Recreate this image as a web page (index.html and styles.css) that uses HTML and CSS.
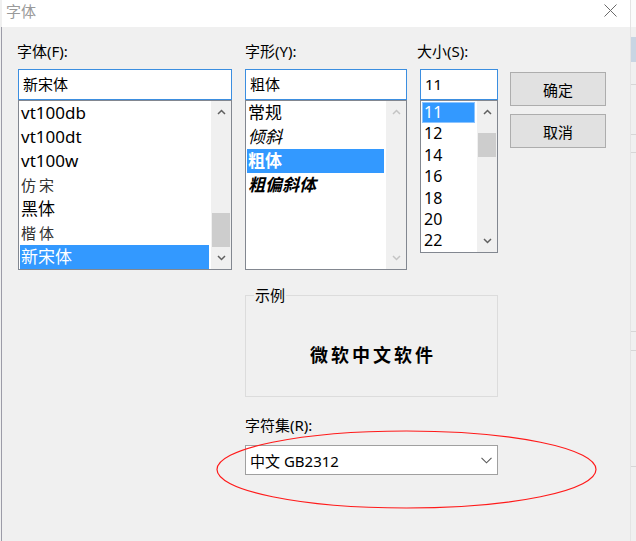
FILE: index.html
```html
<!DOCTYPE html>
<html lang="zh-CN">
<head>
<meta charset="utf-8">
<title>字体</title>
<link rel="stylesheet" href="styles.css">
</head>
<body>
<div class="screen">
  <div class="dialog">
    <div class="titlebar">
      <span class="title">字体</span>
      <svg class="close" width="13" height="13" viewBox="0 0 13 13"><path d="M0.5 0.5 L12.5 12.5 M12.5 0.5 L0.5 12.5" fill="none" stroke="#6a6a6a" stroke-width="1"/></svg>
    </div>
    <div class="body">
      <div class="col">
        <div class="label label-font">字体(F):</div>
        <div class="input">新宋体</div>
        <div class="list list-tall">
          <div class="items">
            <div class="item">vt100db</div>
            <div class="item">vt100dt</div>
            <div class="item">vt100w</div>
            <div class="item item-thin">仿宋</div>
            <div class="item">黑体</div>
            <div class="item item-thin">楷体</div>
            <div class="item sel">新宋体</div>
          </div>
          <div class="sb">
            <div class="sb-btn"><svg width="9" height="6" viewBox="0 0 9 6"><path d="M1 5 L4.5 1.5 L8 5" fill="none" stroke="#606060" stroke-width="1.5"/></svg></div>
            <div class="sb-track track-end"><div class="thumb thumb-font"></div></div>
            <div class="sb-btn"><svg width="9" height="6" viewBox="0 0 9 6"><path d="M1 1 L4.5 4.5 L8 1" fill="none" stroke="#606060" stroke-width="1.5"/></svg></div>
          </div>
        </div>
      </div>

      <div class="col">
        <div class="label">字形(Y):</div>
        <div class="input">粗体</div>
        <div class="list list-tall">
          <div class="items">
            <div class="item">常规</div>
            <div class="item italic">倾斜</div>
            <div class="item bold sel">粗体</div>
            <div class="item bold italic">粗偏斜体</div>
          </div>
          <div class="sb">
            <div class="sb-btn"><svg width="9" height="6" viewBox="0 0 9 6"><path d="M1 5 L4.5 1.5 L8 5" fill="none" stroke="#c4c4c4" stroke-width="1.5"/></svg></div>
            <div class="sb-track"></div>
            <div class="sb-btn"><svg width="9" height="6" viewBox="0 0 9 6"><path d="M1 1 L4.5 4.5 L8 1" fill="none" stroke="#c4c4c4" stroke-width="1.5"/></svg></div>
          </div>
        </div>
      </div>

      <div class="col">
        <div class="label label-size">大小(S):</div>
        <div class="input">11</div>
        <div class="list list-short">
          <div class="items items-size">
            <div class="item size sel">11</div>
            <div class="item size">12</div>
            <div class="item size">14</div>
            <div class="item size">16</div>
            <div class="item size">18</div>
            <div class="item size">20</div>
            <div class="item size">22</div>
          </div>
          <div class="sb">
            <div class="sb-btn"><svg width="9" height="6" viewBox="0 0 9 6"><path d="M1 5 L4.5 1.5 L8 5" fill="none" stroke="#606060" stroke-width="1.5"/></svg></div>
            <div class="sb-track"><div class="thumb thumb-size"></div></div>
            <div class="sb-btn"><svg width="9" height="6" viewBox="0 0 9 6"><path d="M1 1 L4.5 4.5 L8 1" fill="none" stroke="#606060" stroke-width="1.5"/></svg></div>
          </div>
        </div>
      </div>

      <div class="buttons">
        <div class="btn">确定</div>
        <div class="btn">取消</div>
      </div>

      <fieldset class="group">
        <legend>示例</legend>
        <div class="preview">微软中文软件</div>
      </fieldset>

      <div class="charset">
        <div class="label">字符集(R):</div>
        <div class="select">
          <span>中文 GB2312</span>
          <svg width="11" height="7" viewBox="0 0 11 7"><path d="M0.5 0.8 L5.5 5.8 L10.5 0.8" fill="none" stroke="#5a5a5a" stroke-width="1.1"/></svg>
        </div>
      </div>
    </div>
  </div>
  <div class="strip">
    <div class="strip-top"></div>
    <div class="strip-blue"></div>
    <div class="strip-line l1"></div>
    <div class="strip-line l2"></div>
    <div class="strip-line l3"></div>
    <div class="strip-line l4"></div>
    <div class="strip-line l5"></div>
    <div class="strip-line l6"></div>
  </div>
  <svg class="mark" width="636" height="541" viewBox="0 0 636 541"><ellipse cx="406.5" cy="469.5" rx="189.5" ry="38.5" fill="none" stroke="#ff1a1a" stroke-width="1.2"/></svg>
</div>
</body>
</html>
```

FILE: styles.css
```css
* { box-sizing: border-box; }
html, body { margin: 0; padding: 0; }
body {
  font-family: "Noto Sans", "Noto Sans CJK SC", sans-serif;
  font-size: 15px;
  color: #000;
  background: #f0f0f0;
}
.screen {
  position: relative;
  width: 636px;
  height: 541px;
  display: flex;
  overflow: hidden;
}
.dialog {
  width: 630px;
  display: flex;
  flex-direction: column;
  background: #f0f0f0;
}
.titlebar {
  height: 27px;
  margin-left: 2px;
  background: #fff;
  display: flex;
  justify-content: space-between;
  align-items: flex-start;
  padding: 1px 13px 0 4px;
}
.title { font-size: 15px; line-height: 20px; color: #9a9a9a; }
.close { margin-top: 3px; }
.body {
  flex: 1;
  margin-left: 1px;
  border-left: 1px solid #9c9ca8;
  padding: 14px 0 0 16px;
  display: grid;
  grid-template-columns: 214px 162px 78px 96px;
  column-gap: 13px;
  align-content: start;
  align-items: start;
}
.col { display: flex; flex-direction: column; }
.label {
  height: 20px;
  line-height: 20px;
  margin-bottom: 8px;
  white-space: nowrap;
}
.label-font { margin-left: -1px; }
.label-size { margin-left: -3px; }
.input {
  height: 31px;
  border: 1px solid #3b8ee0;
  background: #fff;
  padding-left: 4px;
  line-height: 29px;
  font-size: 15px;
}
.list {
  border: 1px solid #828790;
  background: #fff;
  display: flex;
}
.list-tall { height: 170px; }
.list-short { height: 153px; }
.items { flex: 1; min-width: 0; padding: 0 2px 0 1px; }
.items-size { padding-top: 1px; }
.item {
  height: 24px;
  line-height: 24px;
  font-size: 17px;
  white-space: nowrap;
  padding-left: 1px;
}
.item-thin { font-size: 15px; letter-spacing: 3px; color: #333; }
.item.size { height: 21.4px; line-height: 21.4px; font-size: 16px; padding-left: 2px; }
.item.sel { background: #3399ff; color: #fff; }
.item.size.sel { box-shadow: inset 0 0 0 1px #8cc4ff; }
.italic { font-style: italic; }
.bold { font-weight: 700; }
.sb {
  width: 20px;
  background: #f0f0f0;
  display: flex;
  flex-direction: column;
}
.sb-btn {
  height: 22px;
  display: flex;
  align-items: center;
  justify-content: center;
}
.sb-track { flex: 1; display: flex; flex-direction: column; }
.track-end { justify-content: flex-end; }
.thumb { background: #cdcdcd; margin: 0 1px; }
.thumb-font { height: 34px; }
.thumb-size { height: 24px; margin-top: 10px; }
.buttons {
  padding-top: 31px;
  margin-left: -1px;
  display: flex;
  flex-direction: column;
  gap: 8px;
}
.btn {
  height: 34px;
  width: 96px;
  border: 1px solid #adadad;
  background: #e1e1e1;
  display: flex;
  align-items: center;
  justify-content: center;
  font-size: 15px;
}
.group {
  grid-column: 2 / 4;
  margin: 17px 0 0;
  padding: 0;
  border: 1px solid #dcdcdc;
  min-width: 0;
}
.group legend {
  margin-left: 8px;
  padding: 0 1px;
  font-size: 15px;
  line-height: 16px;
  height: 16px;
}
.preview {
  height: 93px;
  padding: 9px 0 0 3px;
  display: flex;
  align-items: center;
  justify-content: center;
  font-weight: 700;
  font-size: 18px;
  letter-spacing: 3px;
}
.charset { grid-column: 2 / 4; margin-top: 18px; }
.charset .label { margin-bottom: 10px; }
.select {
  height: 30px;
  border: 1px solid #a0a0a0;
  background: #fff;
  display: flex;
  align-items: center;
  justify-content: space-between;
  padding: 0 5px 0 4px;
  font-size: 15px;
}
.strip {
  width: 6px;
  background: #f0f0f0;
  border-left: 1px solid #e4e4e4;
  display: flex;
  flex-direction: column;
}
.strip-top { height: 27px; background: #fbfbfb; }
.strip-blue { height: 25px; margin-top: 10px; background: #c8d5e3; }
.strip-line { height: 1px; background: #d6d6d6; }
.l1 { margin-top: 22px; }
.l2 { margin-top: 49px; }
.l3 { margin-top: 17px; }
.l4 { margin-top: 178px; }
.l5 { margin-top: 18px; }
.l6 { margin-top: 115px; }
.mark {
  position: absolute;
  left: 0;
  top: 0;
  pointer-events: none;
}
```
